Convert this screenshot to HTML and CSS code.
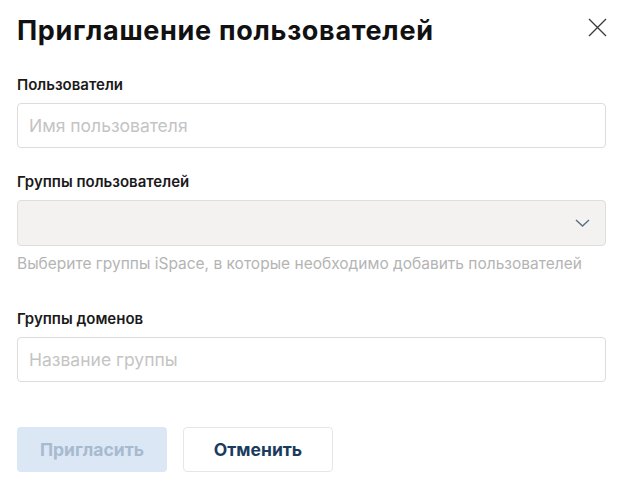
FILE: index.html
```html
<!DOCTYPE html>
<html lang="ru">
  <head>
    <meta charset="UTF-8" />
    <meta name="viewport" content="width=device-width, initial-scale=1.0" />
    <title>Приглашение пользователей</title>
    <link rel="stylesheet" href="styles.css">
  </head>
  <body>
    <div class="modal">
      <header class="modal-header">
        <h1>Приглашение пользователей</h1>
        <button class="close" aria-label="Закрыть">
          <svg width="19" height="19" viewBox="0 0 19 19">
            <path d="M1 1 L18 18 M18 1 L1 18" stroke="#3a3a3a" stroke-width="1.3" fill="none" />
          </svg>
        </button>
      </header>

      <div class="field">
        <label class="field-label">Пользователи</label>
        <input class="input" type="text" placeholder="Имя пользователя" />
      </div>

      <div class="field">
        <label class="field-label">Группы пользователей</label>
        <div class="select">
          <svg width="15" height="8" viewBox="0 0 15 8">
            <path d="M1 1 L7.5 7 L14 1" stroke="#5a6d85" stroke-width="1.4" fill="none" />
          </svg>
        </div>
        <div class="hint">Выберите группы iSpace, в которые необходимо добавить пользователей</div>
      </div>

      <div class="field field-domains">
        <label class="field-label">Группы доменов</label>
        <input class="input" type="text" placeholder="Название группы" />
      </div>

      <div class="actions">
        <button class="button button-primary" disabled>Пригласить</button>
        <button class="button button-secondary">Отменить</button>
      </div>
    </div>
  </body>
</html>
```

FILE: styles.css
```css
* {
  margin: 0;
  padding: 0;
  box-sizing: border-box;
}

body {
  font-family: Inter, "Liberation Sans", Arial, sans-serif;
  color: #111;
  background-color: #fff;
}

.modal {
  padding: 15px 25px 0 17px;
}

.modal-header {
  display: flex;
  justify-content: space-between;
  align-items: flex-start;
  margin-bottom: 29px;
}

h1 {
  font-size: 27px;
  line-height: 32px;
  font-weight: 700;
  letter-spacing: 0.7px;
  color: #111;
}

.close {
  background: none;
  border: none;
  width: 19px;
  height: 19px;
  margin-top: 3px;
  margin-right: -1px;
  display: flex;
  cursor: pointer;
}

.field {
  display: flex;
  flex-direction: column;
  margin-bottom: 25px;
}

.field-label {
  font-size: 15px;
  line-height: 18px;
  font-weight: 600;
  color: #1a1a1a;
  margin-bottom: 9px;
}

.input {
  height: 45px;
  border: 1px solid #dcdcdc;
  border-radius: 4px;
  padding: 0 11px;
  font-family: inherit;
  font-size: 17.5px;
  color: #333;
  outline: none;
}

.input::placeholder {
  color: #c4c4c4;
}

.select {
  height: 46px;
  border: 1px solid #dedede;
  border-radius: 4px;
  background-color: #f4f2f1;
  display: flex;
  align-items: center;
  justify-content: flex-end;
  padding-right: 15px;
}

.hint {
  font-size: 15.5px;
  line-height: 20px;
  color: #b4b4b4;
  margin-top: 8px;
}

.field-domains {
  margin-top: 36px;
}

.actions {
  display: flex;
  gap: 16px;
  margin-top: 45px;
}

.button {
  width: 150px;
  height: 45px;
  border-radius: 4px;
  font-family: inherit;
  font-size: 17.5px;
  font-weight: 700;
  cursor: pointer;
}

.button-primary {
  background-color: #dbe7f4;
  color: #a7bad0;
  border: none;
}

.button-secondary {
  background-color: #fff;
  color: #1b3b5e;
  border: 1px solid #e6e6e6;
}
```
